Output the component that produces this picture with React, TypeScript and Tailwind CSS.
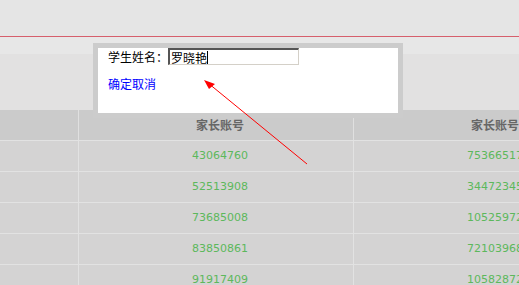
import React from "react";

const col2 = ["43064760", "52513908", "73685008", "83850861", "91917409"];
const col3 = ["75366517", "34472345", "10525972", "72103968", "10582872"];

export default function App() {
  const cjk = { fontFamily: '"Noto Sans CJK SC", "Noto Sans", sans-serif' } as React.CSSProperties;
  return (
    <div className="relative w-[519px] h-[285px] overflow-hidden bg-[#e5e5e5]" style={cjk}>
      <div className="h-[36px] bg-[#e5e5e5]" />
      <div className="h-px bg-[#d65f6c]" />
      <div className="h-[17px] bg-[#e7e7e7]" />
      <div className="h-[56px] bg-[#e2e1e1]" />
      {/* table */}
      <div className="flex flex-col bg-[#d4d3d3]">
        <div className="flex h-[30px] bg-[#cbcbcb] text-[12px] font-bold text-[#666666]">
          <div className="w-[78px] shrink-0" />
          <div className="w-px shrink-0 bg-[#e0e0e0]" />
          <div className="w-[274px] shrink-0 flex items-center justify-center pl-2">家长账号</div>
          <div className="w-px shrink-0 bg-[#e0e0e0]" />
          <div className="w-[274px] shrink-0 flex items-center justify-center pl-2 whitespace-nowrap">家长账号</div>
        </div>
        {col2.map((v, i) => (
          <div key={i} className="flex h-[31px] border-t border-[#e2e2e2] text-[11px] text-[#5cb85c]" style={{ fontFamily: '"DejaVu Sans", sans-serif' }}>
            <div className="w-[78px] shrink-0" />
            <div className="w-px shrink-0 bg-[#e2e2e2]" />
            <div className="w-[274px] shrink-0 flex items-center justify-center pl-2">{v}</div>
            <div className="w-px shrink-0 bg-[#e2e2e2]" />
            <div className="w-[274px] shrink-0 flex items-center justify-center pl-2">{col3[i]}</div>
          </div>
        ))}
      </div>

      {/* dialog */}
      <div className="absolute left-[93px] top-[43px] w-[310px] h-[75px] border-[5px] border-[#cccccc] bg-white">
        <div className="pl-[10px] flex items-start text-[12px] text-black leading-[17px]">
          <span className="pt-[0px]">学生姓名：</span>
          <div className="w-[131px] h-[17px] border-t-2 border-l-2 border-b border-r border-t-[#555555] border-l-[#555555] border-b-[#d4d0c8] border-r-[#d4d0c8] bg-white flex items-center pl-[1px] leading-[13px]">
            <span>罗晓艳</span>
            <span className="inline-block w-px h-[13px] bg-black" />
          </div>
        </div>
        <div className="pl-[10px] mt-[12px] text-[12px] leading-[14px] text-[#0000ff]">
          <a>确定</a><a>取消</a>
        </div>
      </div>

      {/* arrow */}
      <svg className="absolute left-0 top-0" width="519" height="285">
        <line x1="307" y1="164" x2="208" y2="83" stroke="#ff0000" strokeWidth="1" />
        <polygon points="204,80 215,84 209,89" fill="#ff0000" />
      </svg>
    </div>
  );
}
